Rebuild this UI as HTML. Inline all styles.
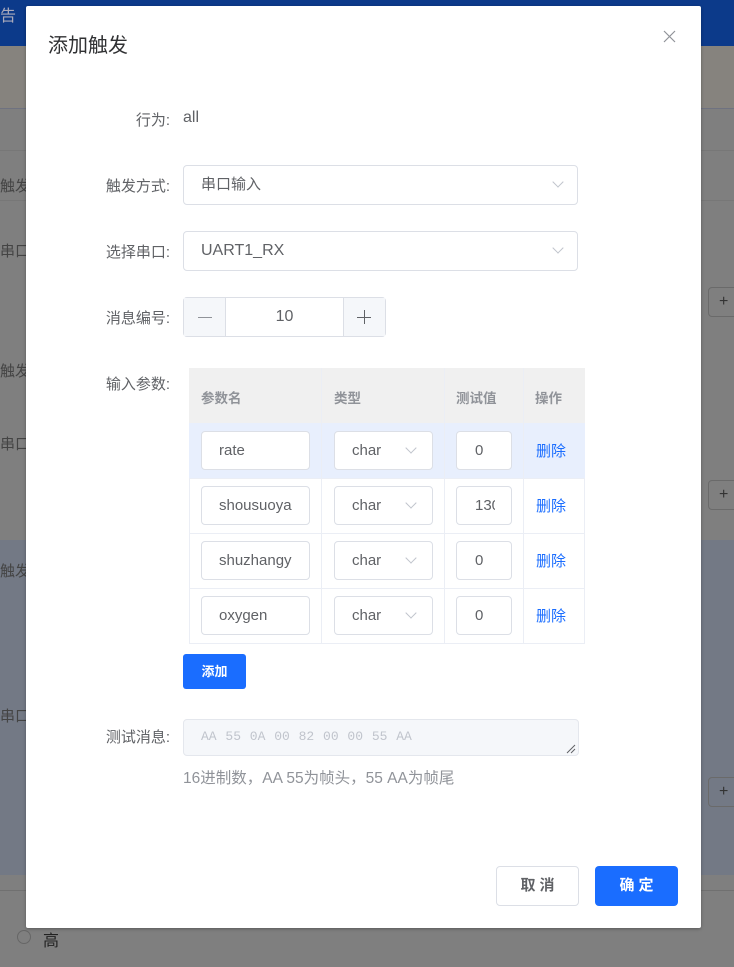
<!DOCTYPE html>
<html style="background:#7f7f7f"><head><meta charset="utf-8"><style>
*{box-sizing:border-box;margin:0;padding:0}
html,body{background:#7f7f7f}
body{width:734px;height:967px;overflow:hidden;position:relative;font-family:"Liberation Sans","Noto Sans CJK SC",sans-serif;}
.abs{position:absolute}
.lbl{position:absolute;right:564px;font-size:15px;color:#606266;text-align:right;white-space:nowrap}
.sel{position:absolute;left:183px;width:395px;height:40px;border:1px solid #dcdfe6;border-radius:4px;font-size:15px;color:#606266;padding-left:17px;line-height:38px;background:#fff}
.chev{position:absolute;width:8px;height:8px;border-right:1px solid #c0c4cc;border-bottom:1px solid #c0c4cc;transform:rotate(45deg)}
.inp{position:absolute;height:39px;border:1px solid #dcdfe6;border-radius:4px;background:#fff;font-size:15px;color:#606266;line-height:37px;overflow:hidden;white-space:nowrap}
.del{position:absolute;left:536px;font-size:15px;color:#1a6dff}
.th{position:absolute;top:387px;font-size:13.5px;color:#909399;font-weight:bold}
</style></head><body>
<div class="abs" style="left:0;top:0;width:734px;height:967px;background:#7f7f7f"></div>
<div class="abs" style="left:0;top:0;width:734px;height:46px;background:#0c3a8a"></div>
<div class="abs" style="left:0;top:2px;color:#aab;font-size:16px">告</div>
<div class="abs" style="left:0;top:46px;width:734px;height:62px;background:#86837e"></div>
<div class="abs" style="left:0;top:108px;width:734px;height:1px;background:#6f7280"></div>
<div class="abs" style="left:0;top:150px;width:734px;height:1px;background:#777"></div>
<div class="abs" style="left:0;top:200px;width:734px;height:1px;background:#777"></div>
<div class="abs" style="left:0;top:175px;color:#444;font-size:15px">触发方</div>
<div class="abs" style="left:0;top:240px;color:#444;font-size:15px">串口</div>
<div class="abs" style="left:0;top:360px;color:#444;font-size:15px">触发方</div>
<div class="abs" style="left:0;top:433px;color:#444;font-size:15px">串口</div>
<div class="abs" style="left:0;top:540px;width:734px;height:335px;background:#737985"></div>
<div class="abs" style="left:0;top:560px;color:#444;font-size:15px">触发方</div>
<div class="abs" style="left:0;top:705px;color:#444;font-size:15px">串口</div>
<div class="abs" style="left:708px;top:287px;width:30px;height:30px;border:1px solid #6a6a6a;border-radius:4px;color:#333;line-height:28px;padding-left:10px">+</div>
<div class="abs" style="left:708px;top:480px;width:30px;height:30px;border:1px solid #6a6a6a;border-radius:4px;color:#333;line-height:28px;padding-left:10px">+</div>
<div class="abs" style="left:708px;top:777px;width:30px;height:30px;border:1px solid #6a6a6a;border-radius:4px;color:#333;line-height:28px;padding-left:10px">+</div>
<div class="abs" style="left:0;top:890px;width:734px;height:1px;background:#707070"></div>
<div class="abs" style="left:17px;top:930px;width:14px;height:14px;border:1px solid #666;border-radius:50%"></div>
<div class="abs" style="left:43px;top:927px;font-size:16px;color:#222">高</div>

<div class="abs" style="left:26px;top:6px;width:675px;height:922px;background:#fff;border-radius:2px;box-shadow:0 1px 3px rgba(0,0,0,.3)"></div>
<div class="abs" style="left:48px;top:29px;font-size:20px;color:#303133">添加触发</div>
<svg class="abs" style="left:663px;top:30px" width="13" height="13"><path d="M1 1L12 12M12 1L1 12" stroke="#909399" stroke-width="1.2"/></svg>

<div class="lbl" style="top:109px">行为:</div>
<div class="abs" style="left:183px;top:109px;font-size:16px;color:#606266">all</div>

<div class="lbl" style="top:175px">触发方式:</div>
<div class="sel" style="top:165px">串口输入<div class="chev" style="left:370px;top:12px"></div></div>
<div class="lbl" style="top:241px">选择串口:</div>
<div class="sel" style="top:231px;font-size:16px">UART1_RX<div class="chev" style="left:370px;top:12px"></div></div>

<div class="lbl" style="top:307px">消息编号:</div>
<div class="abs" style="left:183px;top:297px;width:203px;height:40px;border:1px solid #dcdfe6;border-radius:4px;background:#fff">
 <div class="abs" style="left:0;top:0;width:42px;height:38px;background:#f5f7fa;border-right:1px solid #dcdfe6"></div>
 <div class="abs" style="left:14px;top:19px;width:14px;height:1px;background:#909399"></div>
 <div class="abs" style="left:159px;top:0;width:42px;height:38px;background:#f5f7fa;border-left:1px solid #dcdfe6"></div>
 <div class="abs" style="left:173px;top:19px;width:14px;height:1px;background:#606266"></div>
 <div class="abs" style="left:180px;top:12px;width:1px;height:14px;background:#606266"></div>
 <div class="abs" style="left:42px;width:117px;top:10px;text-align:center;font-size:16px;color:#606266">10</div>
</div>

<div class="lbl" style="top:373px">输入参数:</div>
<div class="abs" style="left:189px;top:368px;width:396px;height:276px;border:1px solid #ebeef5;background:#fff"></div>
<div class="abs" style="left:189px;top:368px;width:396px;height:55px;background:#f0f0f0"></div>
<div class="abs" style="left:189px;top:423px;width:396px;height:55px;background:#e8effd"></div>
<div class="abs" style="left:189px;top:478px;width:396px;height:1px;background:#ebeef5"></div>
<div class="abs" style="left:189px;top:533px;width:396px;height:1px;background:#ebeef5"></div>
<div class="abs" style="left:189px;top:588px;width:396px;height:1px;background:#ebeef5"></div>
<div class="abs" style="left:321px;top:368px;width:1px;height:276px;background:#ebeef5"></div>
<div class="abs" style="left:444px;top:368px;width:1px;height:276px;background:#ebeef5"></div>
<div class="abs" style="left:523px;top:368px;width:1px;height:276px;background:#ebeef5"></div>
<div class="th" style="left:201px">参数名</div>
<div class="th" style="left:334px">类型</div>
<div class="th" style="left:456px">测试值</div>
<div class="th" style="left:535px">操作</div>

<div class="inp" style="left:201px;top:431px;width:109px;padding-left:17px;padding-right:4px">rate</div>
<div class="inp" style="left:334px;top:431px;width:99px;padding-left:17px">char<div class="chev" style="left:72px;top:12px"></div></div>
<div class="inp" style="left:456px;top:431px;width:56px;padding-left:18px">0</div>
<div class="del" style="top:440px">删除</div>

<div class="inp" style="left:201px;top:486px;width:109px;padding-left:17px"><span style="display:inline-block;width:85px;overflow:hidden">shousuoya</span></div>
<div class="inp" style="left:334px;top:486px;width:99px;padding-left:17px">char<div class="chev" style="left:72px;top:12px"></div></div>
<div class="inp" style="left:456px;top:486px;width:56px;padding-left:18px"><span style="display:inline-block;width:20px;overflow:hidden">130</span></div>
<div class="del" style="top:495px">删除</div>

<div class="inp" style="left:201px;top:541px;width:109px;padding-left:17px"><span style="display:inline-block;width:85px;overflow:hidden">shuzhangy</span></div>
<div class="inp" style="left:334px;top:541px;width:99px;padding-left:17px">char<div class="chev" style="left:72px;top:12px"></div></div>
<div class="inp" style="left:456px;top:541px;width:56px;padding-left:18px">0</div>
<div class="del" style="top:550px">删除</div>

<div class="inp" style="left:201px;top:596px;width:109px;padding-left:17px">oxygen</div>
<div class="inp" style="left:334px;top:596px;width:99px;padding-left:17px">char<div class="chev" style="left:72px;top:12px"></div></div>
<div class="inp" style="left:456px;top:596px;width:56px;padding-left:18px">0</div>
<div class="del" style="top:605px">删除</div>

<div class="abs" style="left:183px;top:654px;width:63px;height:35px;background:#1a6dff;border-radius:3px;color:#fff;font-size:13px;font-weight:bold;text-align:center;line-height:35px">添加</div>

<div class="lbl" style="top:726px">测试消息:</div>
<div class="abs" style="left:183px;top:719px;width:396px;height:37px;background:#f5f7fa;border:1px solid #e4e7ed;border-radius:4px;font-family:'Liberation Mono',monospace;font-size:13px;color:#c0c4cc;padding:9px 0 0 17px;word-spacing:1px">AA 55 0A 00 82 00 00 55 AA</div>
<svg class="abs" style="left:566px;top:744px" width="10" height="10"><path d="M1 9L9 1M5 9L9 5" stroke="#606266" stroke-width="1"/></svg>
<div class="abs" style="left:183px;top:766px;font-size:15.5px;color:#909399">16进制数，AA 55为帧头，55 AA为帧尾</div>

<div class="abs" style="left:496px;top:866px;width:83px;height:40px;border:1px solid #dcdfe6;border-radius:4px;background:#fff;text-align:center;line-height:38px;font-size:15px;color:#606266;font-weight:bold;letter-spacing:4px;padding-left:4px">取消</div>
<div class="abs" style="left:595px;top:866px;width:83px;height:40px;border-radius:4px;background:#1a6dff;text-align:center;line-height:40px;font-size:15px;color:#fff;font-weight:bold;letter-spacing:4px;padding-left:4px">确定</div>
</body></html>
